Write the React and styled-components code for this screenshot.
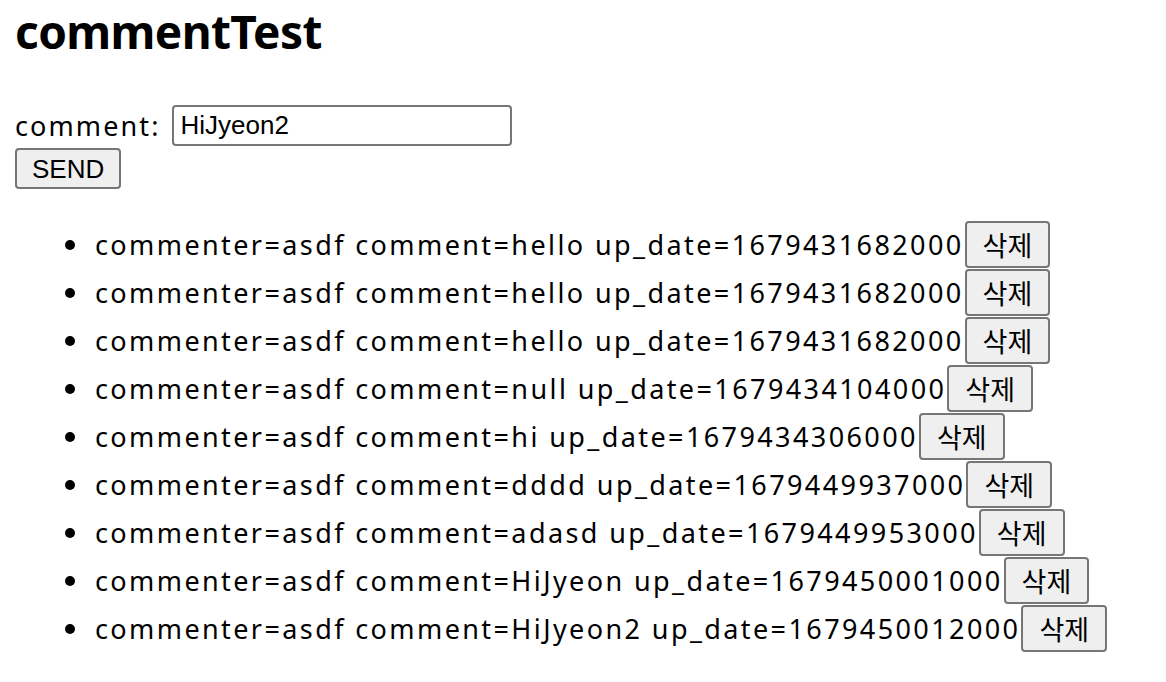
import React from 'react';
import styled, { createGlobalStyle } from 'styled-components';

const GlobalStyle = createGlobalStyle`
  body {
    margin: 0;
    background: #fff;
    color: #000;
    font-family: "Noto Sans", "Noto Sans CJK KR", sans-serif;
  }
`;

const Page = styled.div`
  padding: 0 15px;
`;

const Title = styled.h1`
  margin: 0;
  height: 62px;
  font-size: 46px;
  font-weight: bold;
  line-height: 62px;
  letter-spacing: -0.6px;
`;

const Form = styled.form`
  margin-top: 43px;
  display: flex;
  flex-direction: column;
  align-items: flex-start;
  gap: 2px;
`;

const FieldRow = styled.div`
  display: flex;
  align-items: center;
  gap: 12px;
  font-size: 27px;
  letter-spacing: 2.1px;
`;

const TextInput = styled.input`
  box-sizing: border-box;
  width: 340px;
  height: 41px;
  padding: 0 6px;
  border: 2px solid #767676;
  border-radius: 4px;
  font-family: "Liberation Sans", Arial, sans-serif;
  font-size: 26px;
  letter-spacing: 0;
  color: #000;
  outline: none;
`;

const Button = styled.button`
  box-sizing: border-box;
  height: ${(p) => p.$h || 41}px;
  padding: 0 ${(p) => p.$px || 15}px;
  margin-left: ${(p) => p.$ml || 0}px;
  border: 2px solid #767676;
  border-radius: 4px;
  background: #efefef;
  color: #000;
  font-family: ${(p) => p.$korean ? '"Noto Sans CJK KR", sans-serif' : '"Liberation Sans", Arial, sans-serif'};
  font-size: ${(p) => p.$korean ? 27 : 26}px;
  letter-spacing: 0;
  line-height: 1;
  cursor: pointer;
`;

const List = styled.ul`
  margin: 31px 0 0;
  padding: 0 0 0 80px;
  list-style: none;
  font-size: 27px;
  letter-spacing: 2.4px;
`;

const Item = styled.li`
  position: relative;
  height: 48px;
  display: flex;
  align-items: center;

  &::before {
    content: "";
    position: absolute;
    left: -30px;
    top: 20px;
    width: 10px;
    height: 10px;
    border-radius: 50%;
    background: #000;
  }
`;

const comments = [
  { comment: 'hello', up_date: 1679431682000 },
  { comment: 'hello', up_date: 1679431682000 },
  { comment: 'hello', up_date: 1679431682000 },
  { comment: 'null', up_date: 1679434104000 },
  { comment: 'hi', up_date: 1679434306000 },
  { comment: 'dddd', up_date: 1679449937000 },
  { comment: 'adasd', up_date: 1679449953000 },
  { comment: 'HiJyeon', up_date: 1679450001000 },
  { comment: 'HiJyeon2', up_date: 1679450012000 },
];

const App = () => {
  return (
    <Page>
      <GlobalStyle />
      <Title>commentTest</Title>
      <Form onSubmit={(e) => e.preventDefault()}>
        <FieldRow>
          comment:
          <TextInput defaultValue="HiJyeon2" />
        </FieldRow>
        <Button type="submit" $px={15}>SEND</Button>
      </Form>
      <List>
        {comments.map((c, i) => (
          <Item key={i}>
            commenter=asdf comment={c.comment} up_date={c.up_date}
            <Button type="button" $korean $h={47} $px={16} $ml={1}>삭제</Button>
          </Item>
        ))}
      </List>
    </Page>
  );
};

export default App;
